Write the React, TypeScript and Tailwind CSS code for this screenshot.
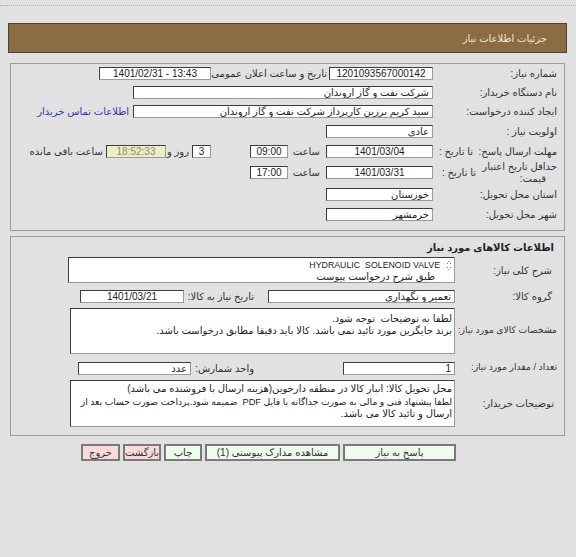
import React from 'react';

type FieldProps = {
  w: string;
  align?: string;
  className?: string;
  ltr?: boolean;
  children?: React.ReactNode;
};

const Field = ({ w, align = 'text-right', className = 'bg-white text-[#222]', ltr, children }: FieldProps) => (
  <div
    dir={ltr ? 'ltr' : undefined}
    className={`${w} ${align} ${className} h-[13px] shrink-0 overflow-hidden whitespace-nowrap border border-[#9a9a9a] border-t-[#3c3c3c] border-l-[#3c3c3c] px-[3px] leading-[11px]`}
  >
    {children}
  </div>
);

const Btn = ({ w, pink, children }: { w: string; pink?: boolean; children: React.ReactNode }) => (
  <div
    className={`${w} ${pink ? 'bg-[#f9dada]' : 'bg-[#eefcee]'} flex h-[17px] shrink-0 items-center justify-center border-2 border-[#7a7a7a] leading-none text-[#333]`}
  >
    {children}
  </div>
);

const SortIcon = () => (
  <svg width="6" height="9" viewBox="0 0 6 9" className="shrink-0">
    <rect x="2.5" y="0" width="1" height="1" fill="#777" />
    <rect x="1" y="2" width="1" height="1" fill="#777" />
    <rect x="4" y="2" width="1" height="1" fill="#777" />
    <rect x="1" y="6" width="1" height="1" fill="#777" />
    <rect x="4" y="6" width="1" height="1" fill="#777" />
    <rect x="2.5" y="8" width="1" height="1" fill="#777" />
  </svg>
);

export default function App() {
  return (
    <div
      dir="rtl"
      className="relative h-[557px] w-[576px] overflow-hidden bg-[#e1e1e1] font-['Liberation_Sans','DejaVu_Sans',sans-serif] text-[10px] text-[#333]"
    >
      <div className="h-[6px] border-b border-dotted border-[#a8a8a8]" />

      <div className="ml-[8px] mr-[9px] mt-[17px] flex h-[30px] items-center border border-[#4f4232] bg-[#8b6c43] pr-[19px] text-[#f1e9da]">
        جزئیات اطلاعات نیاز
      </div>

      {/* general info */}
      <div className="ml-[10px] mr-[11px] mt-[10px] border border-[#9c9c9c] pb-[6px] pr-[7px]">
        <div className="flex h-[19px] items-center">
          <div className="w-[124px] shrink-0">شماره نیاز:</div>
          <Field w="w-[104px]" align="text-center">1201093567000142</Field>
          <div className="w-[118px] shrink-0 whitespace-nowrap pr-[2px]">تاریخ و ساعت اعلان عمومی:</div>
          <Field w="w-[112px]" align="text-center" ltr>1401/02/31 - 13:43</Field>
        </div>
        <div className="flex h-[19px] items-center">
          <div className="w-[124px] shrink-0">نام دستگاه خریدار:</div>
          <Field w="w-[300px]">شرکت نفت و گاز اروندان</Field>
        </div>
        <div className="flex h-[19px] items-center">
          <div className="w-[124px] shrink-0">ایجاد کننده درخواست:</div>
          <Field w="w-[300px]">سید کریم برزین کارپرداز شرکت نفت و گاز اروندان</Field>
          <div className="mr-[4px] whitespace-nowrap text-[#3535b0]">اطلاعات تماس خریدار</div>
        </div>
        <div className="flex h-[20px] items-center">
          <div className="w-[124px] shrink-0">اولویت نیاز :</div>
          <Field w="w-[107px]">عادی</Field>
        </div>
        <div className="flex h-[20px] items-center">
          <div className="flex w-[124px] shrink-0 justify-between whitespace-nowrap pl-[6px]">
            <span>مهلت ارسال پاسخ:</span>
            <span>تا تاریخ :</span>
          </div>
          <Field w="w-[107px]" align="text-center">1401/03/04</Field>
          <div className="w-[38px] shrink-0 pr-[6px]">ساعت</div>
          <Field w="w-[38px]" align="text-center">09:00</Field>
          <div className="w-[39px] shrink-0" />
          <Field w="w-[19px]" align="text-center">3</Field>
          <div className="w-[26px] shrink-0 whitespace-nowrap pr-[3px]">روز و</div>
          <Field w="w-[60px]" align="text-center" className="bg-[#eeedc9] text-[#8d8c6c]">18:52:33</Field>
          <div className="mr-[3px] whitespace-nowrap">ساعت باقی مانده</div>
        </div>
        <div className="flex h-[23px] items-center">
          <div className="flex w-[124px] shrink-0 items-center justify-between whitespace-nowrap pl-[9px]">
            <div className="leading-[12px]">
              <div>حداقل تاریخ اعتبار</div>
              <div className="pr-[11px]">قیمت:</div>
            </div>
            <span>تا تاریخ :</span>
          </div>
          <Field w="w-[107px]" align="text-center">1401/03/31</Field>
          <div className="w-[38px] shrink-0 pr-[6px]">ساعت</div>
          <Field w="w-[38px]" align="text-center">17:00</Field>
        </div>
        <div className="flex h-[20px] items-center">
          <div className="w-[124px] shrink-0">استان محل تحویل:</div>
          <Field w="w-[107px]">خوزستان</Field>
        </div>
        <div className="flex h-[20px] items-center">
          <div className="w-[124px] shrink-0">شهر محل تحویل:</div>
          <Field w="w-[107px]">خرمشهر</Field>
        </div>
      </div>

      {/* goods info */}
      <div className="ml-[10px] mr-[11px] mt-[5px] border border-[#9c9c9c] pb-[8px] pr-[7px]">
        <div className="flex h-[20px] items-center pr-[3px] font-bold text-[#222]">اطلاعات کالاهای مورد نیاز</div>

        <div className="flex h-[26px] items-center">
          <div className="w-[102px] shrink-0 pr-[5px]">شرح کلی نیاز:</div>
          <div className="h-[26px] w-[387px] shrink-0 border border-[#9a9a9a] border-t-[#3c3c3c] border-l-[#3c3c3c] bg-white pr-[2px] pt-[2px] leading-[11px] text-[#222]">
            <div className="flex items-center gap-[6px]">
              <SortIcon />
              <span dir="ltr" className="text-[8.8px]">HYDRAULIC&nbsp; SOLENOID VALVE</span>
            </div>
            <div className="pr-[17px]">طبق شرح درخواست پیوست</div>
          </div>
        </div>

        <div className="mt-[6px] flex h-[14px] items-center">
          <div className="w-[102px] shrink-0 pr-[5px]">گروه کالا:</div>
          <Field w="w-[187px]">تعمیر و نگهداری</Field>
          <div className="w-[84px] shrink-0 whitespace-nowrap pr-[14px]">تاریخ نیاز به کالا:</div>
          <Field w="w-[104px]" align="text-center">1401/03/21</Field>
        </div>

        <div className="mt-[5px] flex h-[46px] items-center">
          <div className="w-[102px] shrink-0 whitespace-nowrap text-[9.2px]">مشخصات کالای مورد نیاز:</div>
          <div className="h-[46px] w-[385px] shrink-0 whitespace-nowrap border border-[#9a9a9a] border-t-[#3c3c3c] border-l-[#3c3c3c] bg-white pr-[2px] pt-[4px] leading-[12px] text-[#222]">
            <div>لطفا به توضیحات&nbsp; توجه شود.</div>
            <div>برند جایگزین مورد تائید نمی باشد. کالا باید دقیقا مطابق درخواست باشد.</div>
          </div>
        </div>

        <div className="mt-[7px] flex h-[14px] items-center">
          <div className="w-[102px] shrink-0 whitespace-nowrap text-[9.2px]">تعداد / مقدار مورد نیاز:</div>
          <Field w="w-[112px]">1</Field>
          <div className="w-[152px] shrink-0 whitespace-nowrap pr-[89px]">واحد شمارش:</div>
          <Field w="w-[113px]">عدد</Field>
        </div>

        <div className="mt-[5px] flex h-[47px] items-center">
          <div className="w-[102px] shrink-0 pr-[3px]">توضیحات خریدار:</div>
          <div className="h-[47px] w-[385px] shrink-0 whitespace-nowrap border border-[#9a9a9a] border-t-[#3c3c3c] border-l-[#3c3c3c] bg-white pr-[2px] pt-[2px] leading-[12.5px] text-[#222]">
            <div>محل تحویل کالا: انبار کالا در منطقه دارخوین(هزینه ارسال با فروشنده می باشد)</div>
            <div className="text-[9.2px]">لطفا پیشنهاد فنی و مالی به صورت جداگانه با فایل PDF&nbsp; ضمیمه شود.پرداخت صورت حساب بعد از</div>
            <div>ارسال و تائید کالا می باشد.</div>
          </div>
        </div>
      </div>

      <div className="mr-[120px] mt-[8px] flex gap-[3px]">
        <Btn w="w-[113px]">پاسخ به نیاز</Btn>
        <Btn w="w-[135px]">مشاهده مدارک پیوستی (1)</Btn>
        <Btn w="w-[38px]">چاپ</Btn>
        <Btn w="w-[38px]" pink>بازگشت</Btn>
        <Btn w="w-[39px]" pink>خروج</Btn>
      </div>
    </div>
  );
}
